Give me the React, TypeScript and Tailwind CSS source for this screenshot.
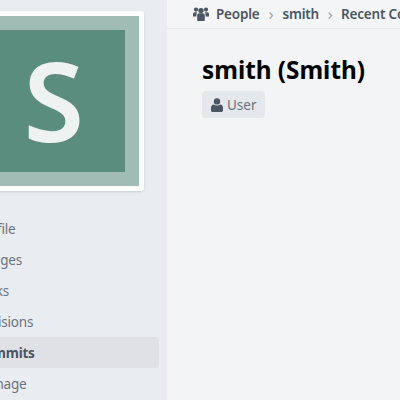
const rows: { text: string; active?: boolean }[] = [
  { text: "Profile" },
  { text: "Images" },
  { text: "Tasks" },
  { text: "Revisions" },
  { text: "Commits", active: true },
  { text: "Manage" },
];

function UsersIcon() {
  return (
    <svg viewBox="0 0 16 14" className="w-[16px] h-[14px] shrink-0 text-[#4b5563] mr-[7px]" fill="currentColor">
      <circle cx="3" cy="2.6" r="2.1" />
      <circle cx="13" cy="2.6" r="2.1" />
      <circle cx="8" cy="3.6" r="2.7" />
      <path d="M0 9.6V7.2C0 6 .8 5.3 1.8 5.3h2.4c-.5.8-.8 1.7-.8 2.6v1.7H0Z" />
      <path d="M16 9.6V7.2c0-1.2-.8-1.9-1.8-1.9h-2.4c.5.8.8 1.7.8 2.6v1.7H16Z" />
      <path d="M4.2 13.2V8.4c0-1.3.9-2.2 2-2.2h3.6c1.1 0 2 .9 2 2.2v4.8c0 .5-.4.8-.8.8H5c-.4 0-.8-.3-.8-.8Z" />
    </svg>
  );
}

function UserIcon() {
  return (
    <svg viewBox="0 0 12 14" className="w-[12px] h-[14px] shrink-0 text-[#4b5563]" fill="currentColor">
      <circle cx="6" cy="3.4" r="3.2" />
      <path d="M0 12.2V9.6C0 7.8 1.2 6.4 2.6 6.4c.9.7 2 1.1 3.4 1.1s2.500-.4 3.400-1.100C10.800 6.400 12 7.800 12 9.600v2.600c0 1-.8 1.800-1.800 1.800H1.800C.8 14 0 13.200 0 12.200Z" />
    </svg>
  );
}

export default function App() {
  return (
    <div className="flex w-[400px] h-[400px] overflow-hidden bg-[#f3f4f6] font-['Noto_Sans','Open_Sans',sans-serif]">
      <aside className="w-[167px] shrink-0 bg-[#e9ecf0] pt-[11px] overflow-hidden">
        <div className="ml-[-36px] w-[180px] h-[180px] bg-white rounded-[3px] p-[5px] shadow-sm">
          <div className="w-full h-full bg-[#9fbdb5] py-[14px] pr-[14px] flex">
            <div className="flex-1 bg-[#5b8d7f] flex items-center justify-end pr-[41px]">
              <span className="text-[#eef2f1] text-[110px] leading-none font-semibold mt-[-4px]">S</span>
            </div>
          </div>
        </div>
        <nav className="mt-[22px] w-[159px] text-[13.5px] tracking-[-0.2px] text-[#6b7280] flex flex-col">
          {rows.map((r) => (
            <div
              key={r.text}
              className={
                r.active
                  ? "h-[31px] flex items-center rounded-r-[3px] bg-[#dfe1e6] font-bold text-[#4b5563]"
                  : "h-[31px] flex items-center"
              }
            >
              <span className="ml-[-24px] mt-[2px] whitespace-nowrap">{r.text}</span>
            </div>
          ))}
        </nav>
      </aside>
      <main className="flex-1 min-w-0 flex flex-col overflow-hidden">
        <div className="h-[29px] shrink-0 border-b border-[#e5e7eb] bg-[#f4f5f7] flex items-center pl-[26px] text-[13.5px] tracking-[-0.2px] font-semibold text-[#4b5563] whitespace-nowrap overflow-hidden">
          <UsersIcon />
          <span>People</span>
          <span className="font-normal text-[#9ca3af] text-[17px] w-[23px] text-center shrink-0 leading-none mt-[-2px]">›</span>
          <span>smith</span>
          <span className="font-normal text-[#9ca3af] text-[17px] w-[22px] text-center shrink-0 leading-none mt-[-2px]">›</span>
          <span>Recent Commits</span>
        </div>
        <div className="pl-[35px] pt-[23px]">
          <h1 className="text-[24.3px] leading-[36px] font-bold text-black whitespace-nowrap">smith (Smith)</h1>
          <div className="mt-[3px] inline-flex items-center h-[27px] pl-[9px] pr-[8px] gap-[4px] rounded-[4px] bg-[#e4e7eb] text-[13.5px] text-[#6b7280]">
            <UserIcon />
            <span className="mt-[1px]">User</span>
          </div>
        </div>
      </main>
    </div>
  );
}
